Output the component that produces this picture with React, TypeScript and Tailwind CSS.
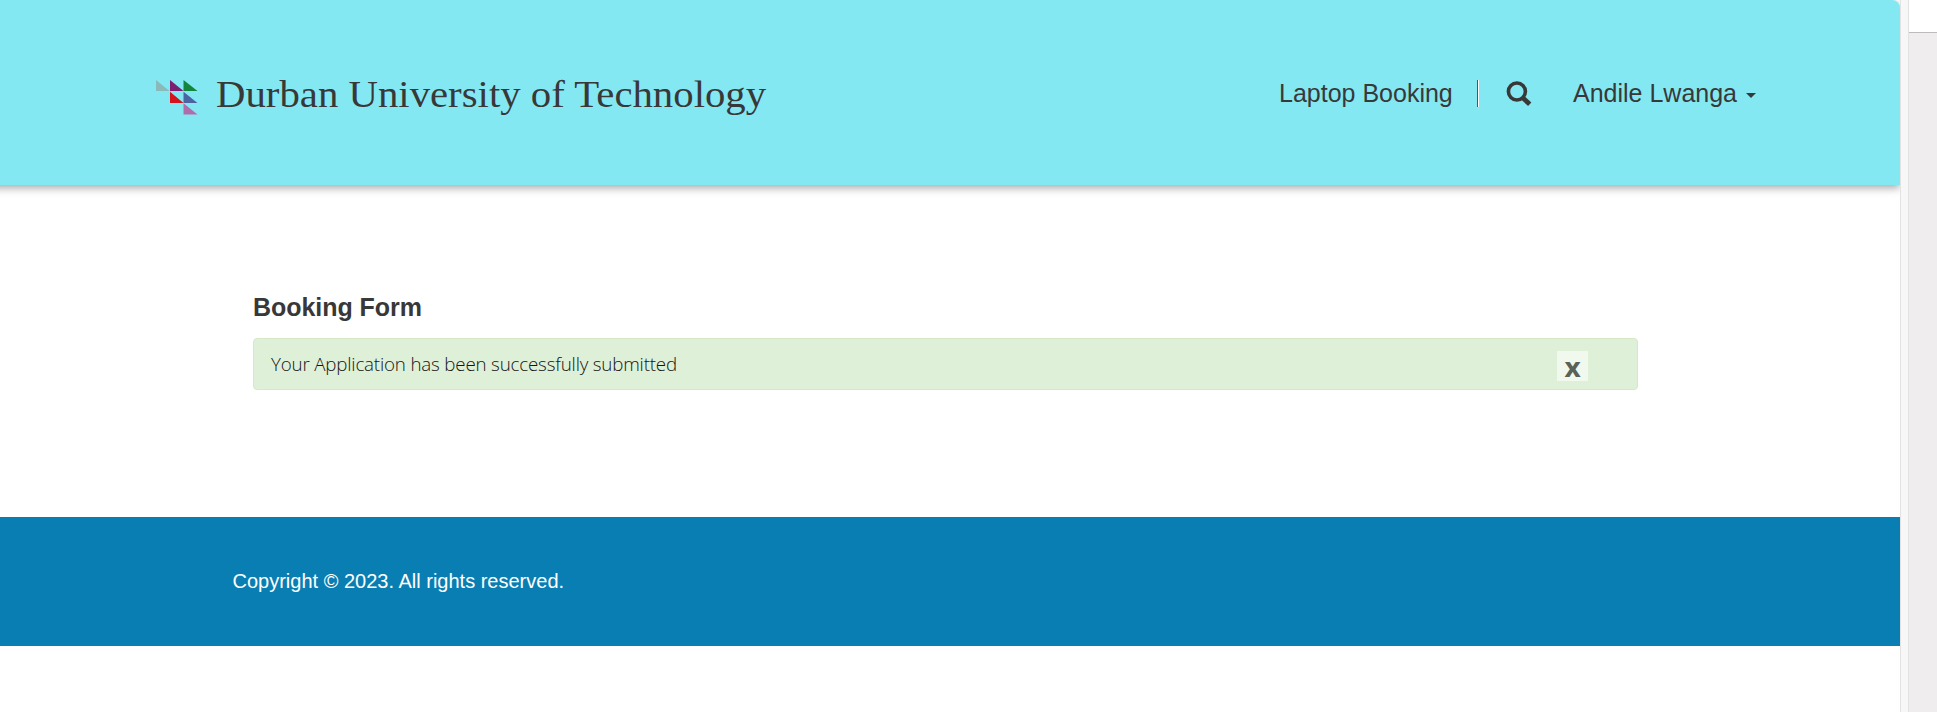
import React from "react";

function Logo() {
  return (
    <svg width="42" height="35" viewBox="0 0 42 35" className="shrink-0">
      <path d="M0 0V11H13.5Z" fill="#8ab9ba" />
      <path d="M14 0V11H27.5Z" fill="#7d1f70" />
      <path d="M27.5 0V11H41.5Z" fill="#14853c" />
      <path d="M14 11.8V23H27.5Z" fill="#d3141c" />
      <path d="M27.5 11.8V23H41.5Z" fill="#4d64a3" />
      <path d="M27.5 23.3V34.5H41.5Z" fill="#b16cab" />
    </svg>
  );
}

function SearchIcon() {
  return (
    <svg width="26" height="26" viewBox="0 0 26 26" fill="none" stroke="#383838" className="shrink-0">
      <circle cx="10.9" cy="10.5" r="8.5" strokeWidth="3.6" />
      <path d="M16.5 16.5L23.7 23.2" strokeWidth="4.8" />
    </svg>
  );
}

function Header() {
  return (
    <header className="relative -ml-3 flex h-[185px] items-start rounded-tr-lg bg-[#84e8f3] pl-[168px] text-[#383838] shadow-[0_3px_8px_rgba(0,0,0,0.35)]">
      <div className="flex w-[1123px] shrink-0 pt-20">
        <Logo />
        <h1 className="-mt-2.5 ml-[18px] origin-left scale-x-[1.073] whitespace-nowrap font-[Georgia,'Liberation_Serif',serif] text-[38px] leading-[48px]">
          Durban University of Technology
        </h1>
      </div>
      <nav className="flex pt-20 text-[25px] leading-7">
        <a className="-mt-px w-[198px] whitespace-nowrap">Laptop Booking</a>
        <span className="h-[27px] w-0.5 border-l border-[#555] bg-white" />
        <span className="ml-[27px] w-[67px] pt-px">
          <SearchIcon />
        </span>
        <a className="-mt-px flex h-7 items-center whitespace-nowrap">
          Andile Lwanga
          <svg width="10" height="5" viewBox="0 0 10 5" className="mt-1 ml-[9px]">
            <path d="M0 0H10L5 5Z" fill="#383838" />
          </svg>
        </a>
      </nav>
    </header>
  );
}

export default function App() {
  return (
    <div className="flex h-[712px] w-[1937px] overflow-hidden bg-white font-['Liberation_Sans',Arial,sans-serif]">
      <div className="flex w-[1900px] shrink-0 flex-col overflow-hidden">
        <Header />
        <main className="h-[332px] pt-[108px] pl-[253px] text-[#383838]">
          <h2 className="text-[25px] leading-7 font-bold tracking-[-0.05px]">Booking Form</h2>
          <div className="mt-[17px] flex h-[52px] w-[1385px] justify-between rounded border border-[#d6e9c6] bg-[#dff0d8] pr-[49px] pl-[17px]">
            <p className="pt-[11px] font-['Segoe_UI','Open_Sans',sans-serif] text-[18.75px] leading-[27px] font-light tracking-[-0.18px] text-[#151515]">
              Your Application has been successfully submitted
            </p>
            <button className="mt-3 h-[30px] w-[31px] bg-[#f1f9ef] font-['Open_Sans',sans-serif] text-[26px] leading-[33px] font-bold text-[#5a6357]">
              <span className="inline-block scale-x-108">x</span>
            </button>
          </div>
        </main>
        <footer className="h-[129px] bg-[#097eb2] pt-[52px] pl-[232.5px] text-xl leading-6 text-white">
          Copyright © 2023. All rights reserved.
        </footer>
      </div>
      <div className="w-[9px] shrink-0 border-x border-[#e3e2e3] bg-[#f7f7f7]" />
      <aside className="flex-1 bg-[#efedee]">
        <div className="h-[33px] border-b border-[#bdbbbd] bg-white" />
      </aside>
    </div>
  );
}
